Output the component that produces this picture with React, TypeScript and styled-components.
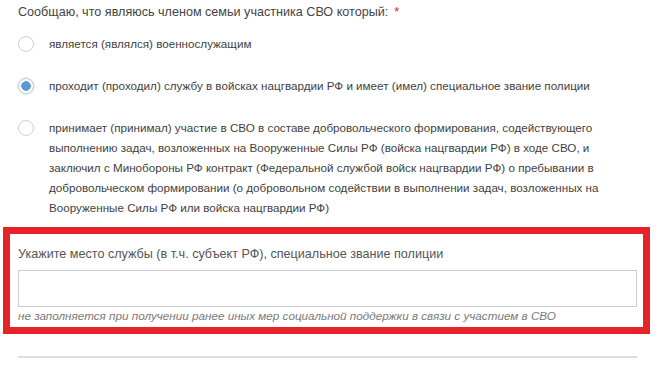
import styled, { createGlobalStyle } from "styled-components";

const GlobalStyle = createGlobalStyle`
  body {
    margin: 0;
    background: #fff;
    font-family: "Liberation Sans", Arial, sans-serif;
  }
`;

const Page = styled.div`
  width: 658px;
  height: 370px;
  overflow: hidden;
  padding-top: 2px;
  box-sizing: border-box;
`;

const Question = styled.div`
  padding: 0 38px 0 18px;
  font-size: 12.6px;
  line-height: 20px;
  color: #444;
`;

const Required = styled.span`
  color: #e0202a;
  margin-left: 6px;
`;

const Options = styled.div`
  display: flex;
  flex-direction: column;
  gap: 22px;
  margin-top: 12px;
`;

const Option = styled.label`
  display: flex;
  align-items: flex-start;
  gap: 15px;
  cursor: pointer;
`;

const Radio = styled.span<{ $checked?: boolean }>`
  flex: none;
  width: 16px;
  height: 16px;
  margin-top: 2px;
  border-radius: 50%;
  box-sizing: border-box;
  border: 1px solid ${({ $checked }) => ($checked ? "#b9cde0" : "#cfcfcf")};
  background: ${({ $checked }) =>
    $checked ? "radial-gradient(circle, #5b9bd5 0 4.5px, #fff 5px)" : "#fff"};
  box-shadow: ${({ $checked }) =>
    $checked ? "0 0 0 1px #e3ecf5" : "none"};
`;

const OptionText = styled.span`
  font-size: 11.65px;
  line-height: 20px;
  color: #3f3f3f;
`;

const Highlight = styled.div`
  margin: 9px 8px 0 3px;
  border: 7px solid #e52329;
  padding: 10px 6px 3px 8px;
`;

const FieldLabel = styled.div`
  font-size: 12.6px;
  line-height: 20px;
  color: #555;
`;

const Input = styled.input`
  display: block;
  width: 100%;
  height: 37px;
  margin-top: 6px;
  box-sizing: border-box;
  border: 1px solid #cccccc;
  outline: none;
  font: inherit;
`;

const Hint = styled.div`
  font-size: 11.7px;
  line-height: 17px;
  font-style: italic;
  color: #7a7a7a;
`;

const Divider = styled.hr`
  margin: 22px 21px 0 18px;
  border: none;
  border-top: 2px solid #dcdcdc;
`;

const options = [
  { text: "является (являлся) военнослужащим", checked: false },
  {
    text: "проходит (проходил) службу в войсках нацгвардии РФ и имеет (имел) специальное звание полиции",
    checked: true,
  },
  {
    text: "принимает (принимал) участие в СВО в составе добровольческого формирования, содействующего выполнению задач, возложенных на Вооруженные Силы РФ (войска нацгвардии РФ) в ходе СВО, и заключил с Минобороны РФ контракт (Федеральной службой войск нацгвардии РФ) о пребывании в добровольческом формировании (о добровольном содействии в выполнении задач, возложенных на Вооруженные Силы РФ или войска нацгвардии РФ)",
    checked: false,
  },
];

const App = () => {
  return (
    <>
      <GlobalStyle />
      <Page>
        <Question>
          Сообщаю, что являюсь членом семьи участника СВО который:
          <Required>*</Required>
          <Options>
            {options.map((o) => (
              <Option key={o.text}>
                <Radio $checked={o.checked} />
                <OptionText>{o.text}</OptionText>
              </Option>
            ))}
          </Options>
        </Question>

        <Highlight>
          <FieldLabel>
            Укажите место службы (в т.ч. субъект РФ), специальное звание полиции
          </FieldLabel>
          <Input type="text" />
          <Hint>
            не заполняется при получении ранее иных мер социальной поддержки в
            связи с участием в СВО
          </Hint>
        </Highlight>

        <Divider />
      </Page>
    </>
  );
};

export default App;
